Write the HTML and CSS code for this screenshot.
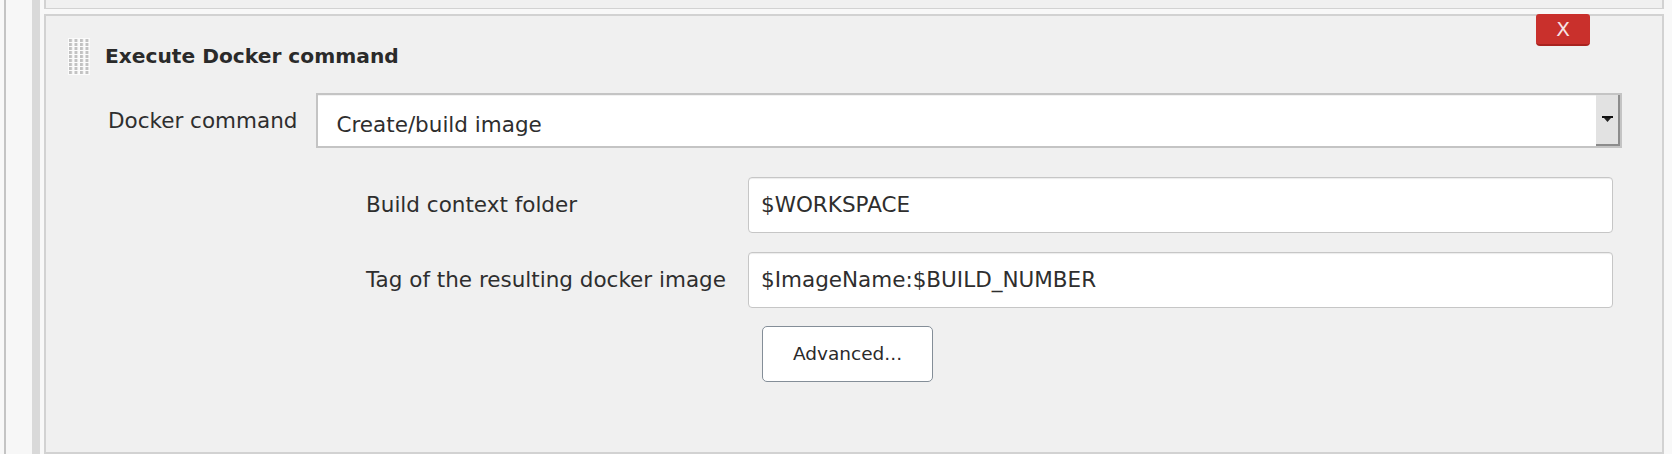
FILE: index.html
```html
<!DOCTYPE html>
<html lang="en">
<head>
<meta charset="utf-8">
<title>Execute Docker command</title>
<link rel="stylesheet" href="styles.css">
</head>
<body>
  <div class="rail"></div>
  <div class="rail-bar"></div>
  <div class="main">
    <div class="prev"></div>
    <section class="panel">
      <button class="delete" type="button">X</button>
      <div class="head">
        <svg class="grip" width="22" height="37" viewBox="0 0 22 37" aria-hidden="true">
          <defs>
            <pattern id="dots" x="1" y="1" width="5.5" height="4" patternUnits="userSpaceOnUse">
              <rect x="0" y="0" width="3" height="3" fill="#c2c2c2"/>
            </pattern>
          </defs>
          <rect x="0" y="0" width="22" height="37" fill="#fbfbfb"/>
          <rect x="0" y="0" width="22" height="37" fill="url(#dots)"/>
        </svg>
        <h2 class="title">Execute Docker command</h2>
      </div>
      <div class="row">
        <label class="label">Docker command</label>
        <div class="select" role="combobox">
          <span class="select-value">Create/build image</span>
          <span class="select-arrow">
            <svg width="11" height="7" viewBox="0 0 11 7" aria-hidden="true">
              <rect x="0" y="0" width="11" height="2" fill="#111"/>
              <polygon points="2,2 9,2 5.5,6" fill="#222"/>
            </svg>
          </span>
        </div>
      </div>
      <div class="sub">
        <label class="label">Build context folder</label>
        <div class="input">$WORKSPACE</div>
        <label class="label">Tag of the resulting docker image</label>
        <div class="input">$ImageName:$BUILD_NUMBER</div>
        <div></div>
        <div class="actions"><button class="advanced" type="button">Advanced...</button></div>
      </div>
    </section>
  </div>
</body>
</html>
```
FILE: styles.css
```css
html, body {
  margin: 0;
  padding: 0;
}
body {
  width: 1672px;
  height: 454px;
  overflow: hidden;
  background: #f8f8f8;
  display: flex;
  font-family: "DejaVu Sans", sans-serif;
  color: #2e2e2e;
}
.rail {
  margin-left: 4px;
  width: 26px;
  border-left: 2px solid #c4c4c4;
  background: #f7f7f7;
}
.rail-bar {
  width: 8px;
  background: #d9d9d9;
}
.main {
  margin-left: 4px;
  width: 1620px;
  display: flex;
  flex-direction: column;
}
.prev {
  height: 8px;
  background: #f0f0f0;
  border-left: 2px solid #d2d2d2;
  border-right: 2px solid #d2d2d2;
  border-bottom: 1px solid #d2d2d2;
}
.panel {
  position: relative;
  margin-top: 5px;
  height: 434px;
  border: 2px solid #d2d2d2;
  background: #f0f0f0;
  padding: 22px 40px 0 62px;
  box-sizing: content-box;
}
.delete {
  position: absolute;
  top: -2px;
  right: 72px;
  width: 54px;
  height: 32px;
  margin: 0;
  padding: 0;
  border: none;
  border-bottom: 2px solid #a9231f;
  border-radius: 3px 3px 4px 4px;
  background: #c9302c;
  color: #f6e4e4;
  font-family: "DejaVu Sans", sans-serif;
  font-size: 20px;
  line-height: 30px;
}
.head {
  display: flex;
  align-items: center;
  margin-left: -40px;
  gap: 15px;
  height: 37px;
}
.grip {
  display: block;
  flex: none;
}
.title {
  margin: 0;
  font-size: 20.2px;
  font-weight: bold;
  color: #2a2a2a;
}
.row {
  display: flex;
  align-items: center;
  margin-top: 18px;
  gap: 19px;
}
.label {
  font-size: 21.5px;
  color: #2e2e2e;
  white-space: nowrap;
}
.select {
  flex: 1;
  display: flex;
  height: 51px;
  border: 2px solid #c4c4c4;
  background: #fff;
}
.select-value {
  flex: 1;
  display: flex;
  align-items: center;
  padding: 8px 0 0 18px;
  font-size: 21.5px;
  color: #2e2e2e;
  border-top: 1px solid #f2f2f2;
}
.select-arrow {
  width: 22px;
  display: flex;
  align-items: center;
  justify-content: center;
  background: #e2e2e2;
  border-right: 2px solid #8c8c8c;
  border-bottom: 2px solid #8c8c8c;
}
.sub {
  display: grid;
  grid-template-columns: 382px 1fr;
  row-gap: 19px;
  align-items: center;
  margin: 29px 9px 0 258px;
}
.input {
  height: 54px;
  display: flex;
  align-items: center;
  padding-left: 12px;
  border: 1.5px solid #c6c6c6;
  border-radius: 4px;
  background: #fff;
  box-shadow: inset 0 2px 1px -1px #ececec;
  font-size: 21.5px;
  color: #2e2e2e;
}
.actions {
  margin-top: -1px;
  padding-left: 14px;
}
.advanced {
  width: 171px;
  height: 56px;
  margin: 0;
  padding: 0;
  border: 1.5px solid #848e98;
  border-radius: 5px;
  background: #fff;
  color: #2a2a2a;
  font-family: "DejaVu Sans", sans-serif;
  font-size: 18.5px;
}
```
